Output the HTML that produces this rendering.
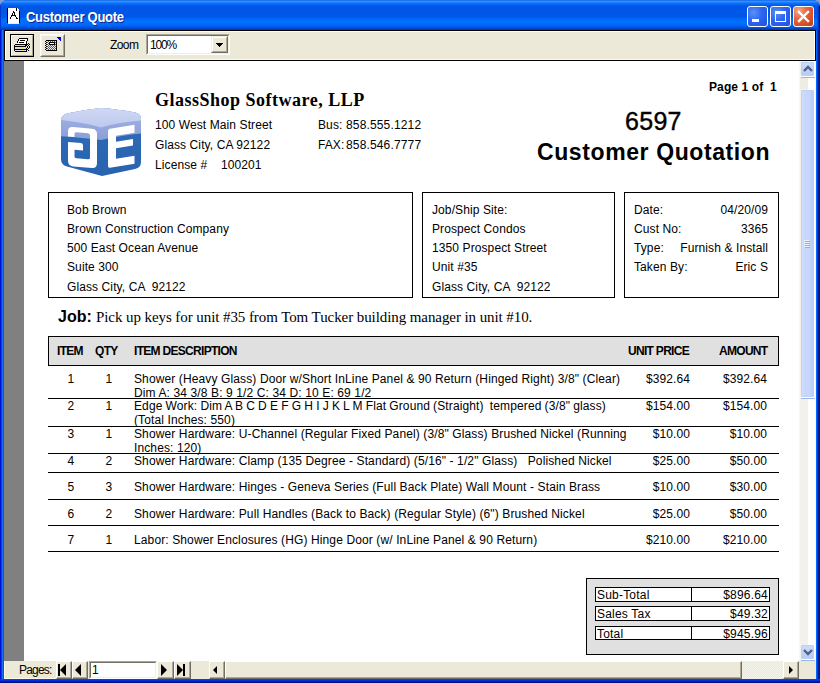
<!DOCTYPE html>
<html><head><meta charset="utf-8">
<style>
*{margin:0;padding:0;box-sizing:border-box}
html,body{width:820px;height:683px;overflow:hidden;background:#fff}
body{position:relative;font-family:"Liberation Sans",sans-serif;color:#000}
.a{position:absolute}
.t{position:absolute;white-space:pre;line-height:1}
.s12{font-size:12px;letter-spacing:0.1px}
.b{font-weight:bold}
.c{text-align:center}
#corner{left:0;top:0;width:820px;height:683px;background:#8a9ad8}
#frame{left:0;top:0;width:820px;height:683px;border-radius:7px 7px 0 0;overflow:hidden;
 background:linear-gradient(to right,#0010d0 0,#0010d0 1px,#0040e0 1px,#0040e0 2px,#1a6ff0 2px,#1a6ff0 3px,#0055e5 3px,#0055e5 816px,#0066ff 816px,#0066ff 817px,#0040d0 817px,#0040d0 818px,#001890 818px)}
#title{left:0;top:0;width:820px;height:30px;border-radius:7px 7px 0 0;
 background:linear-gradient(to bottom,#0050d8 0,#3d95ff 1px,#2a8aff 2px,#0a74ff 3px,#0a6af5 4px,#0060ee 5px,#0057e7 6px,#0057e7 17px,#0062f5 18px,#006cfd 20px,#0070ff 22px,#0068fa 25px,#0060f0 26px,#0050d8 28px,#003cc0 29px,#003cc0 30px)}
#bottomframe{left:0;top:679px;width:820px;height:4px;background:linear-gradient(to bottom,#0040f0 0,#0040f0 1px,#0030e0 1px,#0030e0 2px,#001ca0 2px,#001ca0 3px,#001080 3px)}
.wbtn{top:6px;width:21px;height:21px;border:1px solid #fff;border-radius:3px;
 background:radial-gradient(circle at 30% 30%,#5b8ff8 0,#2d66f0 45%,#1f4fe0 100%)}
#toolbar{left:4px;top:30px;width:812px;height:31px;background:#ece9d8;border:1px solid #000}
#toolbar .in{position:absolute;left:0;top:0;right:0;bottom:0;border:1px solid #fffbf0}
#grey{left:4px;top:61px;width:20px;height:600px;background:#808080}
#page{left:24px;top:61px;width:775px;height:600px;background:#fff}
#vs{left:799px;top:61px;width:17px;height:600px;background:linear-gradient(to right,#fbf8ea 0,#fbf8ea 1px,#f3f1ec 1px,#f3f1ec 9px,#fefefe 9px,#fefefe 16px,#fbf8ea 16px)}
#bbar{left:4px;top:661px;width:812px;height:18px;background:#ece9d8}
.line{position:absolute;background:#000}
.vbtn{width:13px;border-radius:2px;background:linear-gradient(to bottom,#cadbfc 0,#c1d4fa 50%,#b4cbf7 100%);box-shadow:inset 0 0 0 1px #bcd0f8}
.rbtn{background:#ece9d8;border-style:solid;border-width:1px;border-color:#fff #716f64 #716f64 #fff;box-shadow:inset -1px -1px 0 #aca899}
.box{position:absolute;border:1px solid #000}
</style></head><body>
<div id="corner" class="a"></div>
<div id="frame" class="a"></div>
<div id="title" class="a"></div>
<div id="bottomframe" class="a"></div>
<div class="a" style="left:817px;top:6px;width:3px;height:24px;background:linear-gradient(to right,#0050e8 0,#0050e8 1px,#0034c4 1px,#0034c4 2px,#001c98 2px)"></div>
<div class="a" style="left:0;top:6px;width:1px;height:24px;background:#0038d0"></div>

<!-- title icon -->
<svg class="a" style="left:0;top:0" width="24" height="28" viewBox="0 0 24 28" shape-rendering="crispEdges">
<path d="M8,8 H17 L19,10 V24 H8 Z" fill="#fff"/>
<rect x="7" y="8" width="1" height="15" fill="#000"/>
<rect x="19" y="11" width="1" height="12" fill="#000"/>
<rect x="16" y="8" width="1" height="3" fill="#000"/>
<rect x="8" y="23" width="11" height="1" fill="#f4ecd8"/>
<rect x="13" y="11" width="1" height="1" fill="#000"/><rect x="13" y="12" width="1" height="1" fill="#000"/><rect x="14" y="12" width="1" height="1" fill="#000"/><rect x="12" y="13" width="1" height="1" fill="#000"/><rect x="14" y="13" width="1" height="1" fill="#000"/><rect x="12" y="14" width="1" height="1" fill="#000"/><rect x="14" y="14" width="1" height="1" fill="#000"/><rect x="11" y="15" width="1" height="1" fill="#000"/><rect x="12" y="15" width="1" height="1" fill="#000"/><rect x="13" y="15" width="1" height="1" fill="#000"/><rect x="14" y="15" width="1" height="1" fill="#000"/><rect x="15" y="15" width="1" height="1" fill="#000"/><rect x="11" y="16" width="1" height="1" fill="#000"/><rect x="15" y="16" width="1" height="1" fill="#000"/><rect x="10" y="17" width="1" height="1" fill="#000"/><rect x="16" y="17" width="1" height="1" fill="#000"/><rect x="10" y="18" width="1" height="1" fill="#000"/><rect x="17" y="18" width="1" height="1" fill="#000"/><rect x="16" y="18" width="1" height="1" fill="#000"/>
</svg>
<div class="t b" style="left:26px;top:10px;font-size:13px;letter-spacing:-0.3px;transform:scaleY(1.1);transform-origin:0 0;color:#fff;text-shadow:1px 1px 0 #0a2596">Customer Quote</div>
<div class="a wbtn" style="left:747px"><div class="a" style="left:4px;top:12px;width:7px;height:3px;background:#fff"></div></div>
<div class="a wbtn" style="left:770px"><div class="a" style="left:4px;top:4px;width:11px;height:11px;border:1px solid #fff;border-top-width:3px"></div></div>
<div class="a wbtn" style="left:793px;background:radial-gradient(circle at 25% 20%,#f4a890 0,#e8643c 40%,#d44c20 75%,#c03c14 100%)">
<svg class="a" style="left:0;top:0" width="19" height="19" viewBox="0 0 19 19"><path d="M5,5 L14,14 M14,5 L5,14" stroke="#fff" stroke-width="2.4" stroke-linecap="square"/></svg></div>

<!-- toolbar -->
<div id="toolbar" class="a"><div class="in"></div></div>
<div class="a" style="left:10px;top:34px;width:24px;height:23px;border:1px solid #000;background:#ece9d8">
 <div class="a" style="left:0;top:0;right:0;bottom:0;border-style:solid;border-width:1px;border-color:#fff #aca899 #aca899 #fff"></div></div>
<svg class="a" style="left:11px;top:35px" width="22" height="20" viewBox="0 0 22 20" shape-rendering="crispEdges">
<path d="M8,3 H17 V4 H16 V6 H15 V9 H6 V8 H7 V6 H8 Z" fill="#fff"/>
<rect x="8" y="3" width="9" height="1" fill="#000"/>
<rect x="7" y="4" width="1" height="2" fill="#000"/>
<rect x="6" y="6" width="1" height="2" fill="#000"/>
<rect x="16" y="4" width="1" height="2" fill="#000"/>
<rect x="15" y="6" width="1" height="3" fill="#000"/>
<rect x="9" y="5" width="5" height="1" fill="#000"/>
<rect x="8" y="7" width="5" height="1" fill="#000"/>
<rect x="4" y="9" width="12" height="1" fill="#000"/>
<rect x="3" y="10" width="1" height="6" fill="#000"/>
<rect x="4" y="10" width="10" height="1" fill="#d4d4dc"/>
<rect x="4" y="11" width="11" height="1" fill="#000"/>
<rect x="4" y="12" width="11" height="2" fill="#d8d8e0"/>
<rect x="10" y="12" width="3" height="2" fill="#f0f000"/>
<rect x="4" y="14" width="12" height="1" fill="#000"/>
<rect x="5" y="15" width="9" height="1" fill="#d8d8e0"/>
<rect x="4" y="16" width="12" height="1" fill="#000"/>
<rect x="14" y="10" width="2" height="1" fill="#000"/>
<rect x="15" y="8" width="1" height="1" fill="#000"/><rect x="17" y="8" width="1" height="1" fill="#000"/>
<rect x="16" y="9" width="1" height="1" fill="#000"/><rect x="18" y="9" width="1" height="1" fill="#000"/>
<rect x="15" y="10" width="1" height="1" fill="#000"/><rect x="17" y="10" width="1" height="1" fill="#000"/>
<rect x="16" y="11" width="1" height="2" fill="#000"/><rect x="18" y="11" width="1" height="2" fill="#000"/>
<rect x="15" y="13" width="1" height="1" fill="#000"/><rect x="17" y="13" width="1" height="1" fill="#000"/>
<rect x="16" y="14" width="1" height="1" fill="#000"/>
<rect x="15" y="15" width="1" height="1" fill="#000"/><rect x="17" y="15" width="1" height="1" fill="#000"/>
</svg>
<div class="a" style="left:40px;top:34px;width:25px;height:23px;background:#ece9d8;border-style:solid;border-width:1px;border-color:#fff #716f64 #716f64 #fff">
 <div class="a" style="left:0;top:0;right:0;bottom:0;border-style:solid;border-width:1px;border-color:#f5f4ee #aca899 #aca899 #f5f4ee"></div></div>
<svg class="a" style="left:40px;top:34px" width="24" height="22" viewBox="40 34 24 22" shape-rendering="crispEdges">
<rect x="46" y="40" width="11" height="11" fill="#000"/>
<rect x="47" y="41" width="9" height="9" fill="#008c8c"/>
<rect x="47" y="41" width="1" height="1" fill="#e8e8e8"/><rect x="49" y="41" width="1" height="1" fill="#e8e8e8"/><rect x="51" y="41" width="1" height="1" fill="#e8e8e8"/><rect x="53" y="41" width="1" height="1" fill="#e8e8e8"/><rect x="55" y="41" width="1" height="1" fill="#e8e8e8"/><rect x="48" y="42" width="1" height="1" fill="#e8e8e8"/><rect x="50" y="42" width="1" height="1" fill="#e8e8e8"/><rect x="52" y="42" width="1" height="1" fill="#e8e8e8"/><rect x="54" y="42" width="1" height="1" fill="#e8e8e8"/><rect x="47" y="43" width="1" height="1" fill="#e8e8e8"/><rect x="49" y="43" width="1" height="1" fill="#e8e8e8"/><rect x="51" y="43" width="1" height="1" fill="#e8e8e8"/><rect x="53" y="43" width="1" height="1" fill="#e8e8e8"/><rect x="55" y="43" width="1" height="1" fill="#e8e8e8"/><rect x="48" y="44" width="1" height="1" fill="#e8e8e8"/><rect x="50" y="44" width="1" height="1" fill="#e8e8e8"/><rect x="52" y="44" width="1" height="1" fill="#e8e8e8"/><rect x="54" y="44" width="1" height="1" fill="#e8e8e8"/><rect x="47" y="45" width="1" height="1" fill="#e8e8e8"/><rect x="49" y="45" width="1" height="1" fill="#e8e8e8"/><rect x="51" y="45" width="1" height="1" fill="#e8e8e8"/><rect x="53" y="45" width="1" height="1" fill="#e8e8e8"/><rect x="55" y="45" width="1" height="1" fill="#e8e8e8"/><rect x="48" y="46" width="1" height="1" fill="#e8e8e8"/><rect x="50" y="46" width="1" height="1" fill="#e8e8e8"/><rect x="52" y="46" width="1" height="1" fill="#e8e8e8"/><rect x="54" y="46" width="1" height="1" fill="#e8e8e8"/><rect x="47" y="47" width="1" height="1" fill="#e8e8e8"/><rect x="49" y="47" width="1" height="1" fill="#e8e8e8"/><rect x="51" y="47" width="1" height="1" fill="#e8e8e8"/><rect x="53" y="47" width="1" height="1" fill="#e8e8e8"/><rect x="55" y="47" width="1" height="1" fill="#e8e8e8"/><rect x="48" y="48" width="1" height="1" fill="#e8e8e8"/><rect x="50" y="48" width="1" height="1" fill="#e8e8e8"/><rect x="52" y="48" width="1" height="1" fill="#e8e8e8"/><rect x="54" y="48" width="1" height="1" fill="#e8e8e8"/><rect x="47" y="49" width="1" height="1" fill="#e8e8e8"/><rect x="49" y="49" width="1" height="1" fill="#e8e8e8"/><rect x="51" y="49" width="1" height="1" fill="#e8e8e8"/><rect x="53" y="49" width="1" height="1" fill="#e8e8e8"/><rect x="55" y="49" width="1" height="1" fill="#e8e8e8"/>
<rect x="49" y="42" width="6" height="3" fill="#000"/>
<rect x="50" y="43" width="4" height="1" fill="#fff"/>
<rect x="46" y="41" width="1" height="1" fill="#f0e000"/><rect x="46" y="43" width="1" height="1" fill="#f0e000"/><rect x="46" y="45" width="1" height="1" fill="#f0e000"/><rect x="46" y="47" width="1" height="1" fill="#f0e000"/><rect x="46" y="49" width="1" height="1" fill="#f0e000"/>
<rect x="45" y="41" width="1" height="1" fill="#000"/><rect x="45" y="43" width="1" height="1" fill="#000"/><rect x="45" y="45" width="1" height="1" fill="#000"/><rect x="45" y="47" width="1" height="1" fill="#000"/><rect x="45" y="49" width="1" height="1" fill="#000"/>
<path d="M56,37 H61 V42 Z" fill="#0000e0"/>
</svg>
<div class="t" style="left:110px;top:39px;font-size:12px;letter-spacing:-0.6px">Zoom</div>
<div class="a" style="left:146px;top:34px;width:84px;height:21px;background:#fff;border-style:solid;border-width:1px;border-color:#aca899 #fff #fff #aca899">
 <div class="a" style="left:0;top:0;right:0;bottom:0;border-style:solid;border-width:1px;border-color:#716f64 #f1efe2 #f1efe2 #716f64"></div></div>
<div class="t" style="left:150px;top:39px;font-size:12px;letter-spacing:-1.2px">100%</div>
<div class="a" style="left:211px;top:36px;width:17px;height:17px;background:#ece9d8;border-style:solid;border-width:1px;border-color:#f1efe2 #716f64 #716f64 #f1efe2">
 <div class="a" style="left:0;top:0;right:0;bottom:0;border-style:solid;border-width:1px;border-color:#fff #aca899 #aca899 #fff"></div></div>
<svg class="a" style="left:216px;top:43px" width="7" height="4" viewBox="0 0 7 4" shape-rendering="crispEdges"><rect x="0" y="0" width="7" height="1"/><rect x="1" y="1" width="5" height="1"/><rect x="2" y="2" width="3" height="1"/><rect x="3" y="3" width="1" height="1"/></svg>

<div id="grey" class="a"></div>
<div id="page" class="a"></div>
<div id="vs" class="a"></div>
<div class="a" style="left:800px;top:78px;width:8px;height:11px;background:#eeede5"></div>
<div class="a vbtn" style="left:801px;top:62px;height:14px"></div>
<div class="a" style="left:801px;top:76px;width:14px;height:1px;background:#fff"></div>
<div class="a" style="left:801px;top:77px;width:14px;height:1px;background:#9db4e8"></div>
<svg class="a" style="left:801px;top:62px" width="14" height="14" viewBox="0 0 14 14"><path d="M3,9 L7,5 L11,9" fill="none" stroke="#4d6185" stroke-width="2.4"/></svg>
<div class="a vbtn" style="left:801px;top:90px;height:307px;background:linear-gradient(to right,#b8cdf8 0,#d2e0fd 1px,#c8d7fc 3px,#c6d5fb 9px,#b6cbf6 12px,#aec4f2 13px)"></div>
<div class="a" style="left:801px;top:397px;width:14px;height:1px;background:#fff"></div>
<div class="a" style="left:801px;top:398px;width:14px;height:1px;background:#9db4e8"></div>
<svg class="a" style="left:800px;top:238px" width="14" height="10" viewBox="0 0 14 10">
<path d="M4,2.5 L9,2.5 M4,4.5 L9,4.5 M4,6.5 L9,6.5 M4,8.5 L9,8.5" stroke="#eef4ff" stroke-width="1"/>
<path d="M5,3.5 L10,3.5 M5,5.5 L10,5.5 M5,7.5 L10,7.5 M5,9.5 L10,9.5" stroke="#8faef0" stroke-width="1"/>
</svg>
<div class="a vbtn" style="left:801px;top:645px;height:14px"></div>
<div class="a" style="left:801px;top:659px;width:14px;height:1px;background:#fff"></div>
<div class="a" style="left:801px;top:660px;width:14px;height:1px;background:#9db4e8"></div>
<svg class="a" style="left:801px;top:645px" width="14" height="14" viewBox="0 0 14 14"><path d="M3,5 L7,9 L11,5" fill="none" stroke="#4d6185" stroke-width="2.4"/></svg>

<div id="bbar" class="a"></div>
<div class="a" style="left:4px;top:661px;width:52px;height:18px;background:#ece9d8;border-left:1px solid #fff8e0;border-bottom:1px solid #fff8e0"></div>
<div class="t" style="left:19px;top:664px;font-size:12px;letter-spacing:-0.8px">Pages:</div>
<div class="a rbtn" style="left:56px;top:661px;width:16px;height:18px"></div>
<div class="a" style="left:58px;top:664px;width:2px;height:12px;background:#000"></div>
<div class="a" style="left:60px;top:664px;width:0;height:0;border-style:solid;border-width:6px 6px 6px 0;border-color:transparent #000 transparent transparent"></div>
<div class="a rbtn" style="left:72px;top:661px;width:16px;height:18px"></div>
<div class="a" style="left:75px;top:664px;width:0;height:0;border-style:solid;border-width:6px 6px 6px 0;border-color:transparent #000 transparent transparent"></div>
<div class="a" style="left:89px;top:661px;width:68px;height:18px;background:#fff;border-style:solid;border-width:1px;border-color:#aca899 #fff #fff #aca899">
 <div class="a" style="left:0;top:0;right:0;bottom:0;border-style:solid;border-width:1px;border-color:#716f64 #f1efe2 #f1efe2 #716f64"></div></div>
<div class="t" style="left:92px;top:664px;font-size:12px">1</div>
<div class="a rbtn" style="left:157px;top:661px;width:17px;height:18px"></div>
<div class="a" style="left:161px;top:664px;width:0;height:0;border-style:solid;border-width:6px 0 6px 6px;border-color:transparent transparent transparent #000"></div>
<div class="a rbtn" style="left:174px;top:661px;width:17px;height:18px"></div>
<div class="a" style="left:177px;top:664px;width:0;height:0;border-style:solid;border-width:6px 0 6px 6px;border-color:transparent transparent transparent #000"></div>
<div class="a" style="left:183px;top:664px;width:2px;height:12px;background:#000"></div>
<div class="a" style="left:191px;top:661px;width:18px;height:18px;background:#ece9d8"></div>
<div class="a" style="left:209px;top:661px;width:590px;height:18px;background-color:#f5f4ea;background-image:linear-gradient(45deg,#ece9d8 25%,transparent 25%,transparent 75%,#ece9d8 75%),linear-gradient(45deg,#ece9d8 25%,transparent 25%,transparent 75%,#ece9d8 75%);background-size:2px 2px;background-position:0 0,1px 1px"></div>
<div class="a rbtn" style="left:209px;top:661px;width:16px;height:18px"></div>
<div class="a" style="left:213px;top:666px;width:0;height:0;border-style:solid;border-width:4px 4px 4px 0;border-color:transparent #000 transparent transparent"></div>
<div class="a rbtn" style="left:225px;top:661px;width:517px;height:18px"></div>
<div class="a rbtn" style="left:783px;top:661px;width:16px;height:18px"></div>
<div class="a" style="left:789px;top:666px;width:0;height:0;border-style:solid;border-width:4px 0 4px 4px;border-color:transparent transparent transparent #000"></div>
<div class="a" style="left:799px;top:661px;width:17px;height:18px;background:#ece9d8"></div>

<!-- page content -->
<svg class="a" style="left:56px;top:104px" width="90" height="76" viewBox="56 104 90 76">
<defs>
<clipPath id="cube"><path d="M61,121 Q61,115 67,113.5 Q85,109.5 101,108 Q120,109.5 135,112.5 Q141,113.5 141,119 L141,162 Q141,167.5 135,169 L102,176 L67,166.5 Q61,165 61,159 Z"/></clipPath>
<linearGradient id="gtop" x1="0" y1="0" x2="0" y2="1"><stop offset="0" stop-color="#d4dcf5"/><stop offset="1" stop-color="#bcc8ee"/></linearGradient>
<linearGradient id="gband" x1="0" y1="0" x2="0" y2="1"><stop offset="0" stop-color="#aab8e6"/><stop offset="1" stop-color="#8a9ed8"/></linearGradient>
<linearGradient id="gdark" x1="0" y1="0" x2="0" y2="1"><stop offset="0" stop-color="#2f6cb8"/><stop offset="1" stop-color="#2963b0"/></linearGradient>
</defs>
<g clip-path="url(#cube)">
<rect x="56" y="104" width="90" height="76" fill="url(#gdark)"/>
<path d="M56,104 L146,104 L146,133 Q125,134.5 101,140 Q82,137.5 56,135.8 Z" fill="url(#gband)"/>
<path d="M56,104 L146,104 L146,120 Q118,122 101,127.5 Q84,122 56,119.5 Z" fill="url(#gtop)"/>
</g>
<path fill="#fff" transform="matrix(1,0.087,0,1,0,-5.57)" d="M68,136.2 L68,131 Q68,126.2 73,126.2 L92,126.2 Q97,126.2 97,131 L97,160.5 Q97,165.6 92,165.6 L73,165.6 Q68,165.6 68,160.5 L68,141.6 L81,141.6 Q83,141.6 83,143.6 L83,148.8 L74.5,148.8 L74.5,155.5 Q74.5,157.2 76.5,157.2 L88,157.2 Q90,157.2 90,155.2 L90,133.1 Q90,131.1 88,131.1 L76.5,131.1 Q74.5,131.1 74.5,133.1 L74.5,136.2 Z"/>
<path fill="#fff" transform="matrix(1,-0.16,0,1,0,17.28)" d="M108,131 Q108,129 110,129 L134.5,129 L134.5,137 L116,137 L116,143 L133,143 L133,149.5 L116,149.5 L116,160 L134.5,160 L134.5,168 L110,168 Q108,168 108,166 Z"/>
</svg>

<div class="t b" style="left:155px;top:91px;font-family:'Liberation Serif',serif;font-size:18px;letter-spacing:0.5px">GlassShop Software, LLP</div>
<div class="t s12" style="left:155px;top:119px">100 West Main Street</div>
<div class="t s12" style="left:155px;top:139px">Glass City, CA 92122</div>
<div class="t s12" style="left:155px;top:159px">License #</div><div class="t s12" style="left:221px;top:159px">100201</div>
<div class="t s12" style="left:318px;top:119px">Bus:</div><div class="t s12" style="left:346px;top:119px;letter-spacing:0.15px">858.555.1212</div>
<div class="t s12" style="left:318px;top:139px">FAX:</div><div class="t s12" style="left:346px;top:139px;letter-spacing:0.15px">858.546.7777</div>

<div class="t s12 b" style="left:709px;top:81px">Page 1 of  1</div>
<div class="t" style="left:625px;top:109px;font-size:25px;letter-spacing:0.3px;-webkit-text-stroke:0.4px #000">6597</div>
<div class="t b" style="left:537px;top:141px;font-size:23px;letter-spacing:0.6px">Customer Quotation</div>

<div class="box" style="left:48px;top:192px;width:365px;height:106px"></div>
<div class="box" style="left:422px;top:192px;width:193px;height:106px"></div>
<div class="box" style="left:624px;top:192px;width:155px;height:106px"></div>

<div class="t s12" style="left:67px;top:204px">Bob Brown</div>
<div class="t s12" style="left:67px;top:223px">Brown Construction Company</div>
<div class="t s12" style="left:67px;top:242px">500 East Ocean Avenue</div>
<div class="t s12" style="left:67px;top:261px">Suite 300</div>
<div class="t s12" style="left:67px;top:281px">Glass City, CA  92122</div>

<div class="t s12" style="left:432px;top:204px">Job/Ship Site:</div>
<div class="t s12" style="left:432px;top:223px">Prospect Condos</div>
<div class="t s12" style="left:432px;top:242px">1350 Prospect Street</div>
<div class="t s12" style="left:432px;top:261px">Unit #35</div>
<div class="t s12" style="left:432px;top:281px">Glass City, CA  92122</div>

<div class="t s12" style="left:634px;top:204px">Date:</div>
<div class="t s12" style="left:634px;top:223px">Cust No:</div>
<div class="t s12" style="left:634px;top:242px">Type:</div>
<div class="t s12" style="left:634px;top:261px">Taken By:</div>
<div class="t s12" style="right:52px;top:204px">04/20/09</div>
<div class="t s12" style="right:52px;top:223px">3365</div>
<div class="t s12" style="right:52px;top:242px">Furnish &amp; Install</div>
<div class="t s12" style="right:52px;top:261px">Eric S</div>

<div class="t b" style="left:58px;top:309px;font-size:16px">Job:</div>
<div class="t" style="left:96px;top:310px;font-size:15px;letter-spacing:-0.08px;font-family:'Liberation Serif',serif">Pick up keys for unit #35 from Tom Tucker building manager in unit #10.</div>

<div class="box" style="left:48px;top:336px;width:731px;height:30px;background:#e0e0e0"></div>
<div class="t s12 b" style="left:57px;top:345px;letter-spacing:-0.7px">ITEM</div>
<div class="t s12 b" style="left:95px;top:345px;letter-spacing:-0.7px">QTY</div>
<div class="t s12 b" style="left:134px;top:345px;letter-spacing:-0.7px">ITEM DESCRIPTION</div>
<div class="t s12 b" style="left:628px;top:345px;letter-spacing:-0.7px">UNIT PRICE</div>
<div class="t s12 b" style="left:719px;top:345px;letter-spacing:-0.7px">AMOUNT</div>

<div class="t s12 c" style="left:60px;width:22px;top:373px">1</div>
<div class="t s12 c" style="left:98px;width:22px;top:373px">1</div>
<div class="t s12" style="left:134px;top:373px;letter-spacing:0.12px">Shower (Heavy Glass) Door w/Short InLine Panel &amp; 90 Return (Hinged Right) 3/8" (Clear)</div>
<div class="t s12" style="left:134px;top:387px;letter-spacing:0.12px">Dim A: 34 3/8 B: 9 1/2 C: 34 D: 10 E: 69 1/2</div>
<div class="t s12" style="right:130px;top:373px">$392.64</div>
<div class="t s12" style="right:53px;top:373px">$392.64</div>
<div class="t s12 c" style="left:60px;width:22px;top:400px">2</div>
<div class="t s12 c" style="left:98px;width:22px;top:400px">1</div>
<div class="t s12" style="left:134px;top:400px;letter-spacing:0.12px;word-spacing:-0.37px">Edge Work: Dim A B C D E F G H I J K L M Flat Ground (Straight)  tempered (3/8" glass)</div>
<div class="t s12" style="left:134px;top:414px;letter-spacing:0.12px">(Total Inches: 550)</div>
<div class="t s12" style="right:130px;top:400px">$154.00</div>
<div class="t s12" style="right:53px;top:400px">$154.00</div>
<div class="t s12 c" style="left:60px;width:22px;top:428px">3</div>
<div class="t s12 c" style="left:98px;width:22px;top:428px">1</div>
<div class="t s12" style="left:134px;top:428px;letter-spacing:0.12px">Shower Hardware: U-Channel (Regular Fixed Panel) (3/8" Glass) Brushed Nickel (Running</div>
<div class="t s12" style="left:134px;top:442px;letter-spacing:0.12px">Inches: 120)</div>
<div class="t s12" style="right:130px;top:428px">$10.00</div>
<div class="t s12" style="right:53px;top:428px">$10.00</div>
<div class="t s12 c" style="left:60px;width:22px;top:455px">4</div>
<div class="t s12 c" style="left:98px;width:22px;top:455px">2</div>
<div class="t s12" style="left:134px;top:455px;letter-spacing:0.12px">Shower Hardware: Clamp (135 Degree - Standard) (5/16" - 1/2" Glass)   Polished Nickel</div>
<div class="t s12" style="right:130px;top:455px">$25.00</div>
<div class="t s12" style="right:53px;top:455px">$50.00</div>
<div class="t s12 c" style="left:60px;width:22px;top:481px">5</div>
<div class="t s12 c" style="left:98px;width:22px;top:481px">3</div>
<div class="t s12" style="left:134px;top:481px;letter-spacing:0.12px">Shower Hardware: Hinges - Geneva Series (Full Back Plate) Wall Mount - Stain Brass</div>
<div class="t s12" style="right:130px;top:481px">$10.00</div>
<div class="t s12" style="right:53px;top:481px">$30.00</div>
<div class="t s12 c" style="left:60px;width:22px;top:508px">6</div>
<div class="t s12 c" style="left:98px;width:22px;top:508px">2</div>
<div class="t s12" style="left:134px;top:508px;letter-spacing:0.12px">Shower Hardware: Pull Handles (Back to Back) (Regular Style) (6") Brushed Nickel</div>
<div class="t s12" style="right:130px;top:508px">$25.00</div>
<div class="t s12" style="right:53px;top:508px">$50.00</div>
<div class="t s12 c" style="left:60px;width:22px;top:534px">7</div>
<div class="t s12 c" style="left:98px;width:22px;top:534px">1</div>
<div class="t s12" style="left:134px;top:534px;letter-spacing:0.12px">Labor: Shower Enclosures (HG) Hinge Door (w/ InLine Panel &amp; 90 Return)</div>
<div class="t s12" style="right:130px;top:534px">$210.00</div>
<div class="t s12" style="right:53px;top:534px">$210.00</div>
<div class="line" style="left:48px;top:398px;width:731px;height:1px"></div>
<div class="line" style="left:48px;top:426px;width:731px;height:1px"></div>
<div class="line" style="left:48px;top:453px;width:731px;height:1px"></div>
<div class="line" style="left:48px;top:472px;width:731px;height:1px"></div>
<div class="line" style="left:48px;top:499px;width:731px;height:1px"></div>
<div class="line" style="left:48px;top:525px;width:731px;height:1px"></div>
<div class="line" style="left:48px;top:551px;width:731px;height:1px"></div>
<div class="box" style="left:586px;top:578px;width:193px;height:77px;background:#e0e0e0"></div>
<div class="box" style="left:595px;top:587px;width:175px;height:15px;background:#fff"></div>
<div class="line" style="left:691px;top:587px;width:1px;height:15px"></div>
<div class="t s12" style="left:597px;top:589px;letter-spacing:0.2px">Sub-Total</div>
<div class="t s12" style="right:52px;top:589px;letter-spacing:0.2px">$896.64</div>
<div class="box" style="left:595px;top:606px;width:175px;height:15px;background:#fff"></div>
<div class="line" style="left:691px;top:606px;width:1px;height:15px"></div>
<div class="t s12" style="left:597px;top:608px;letter-spacing:0.2px">Sales Tax</div>
<div class="t s12" style="right:52px;top:608px;letter-spacing:0.2px">$49.32</div>
<div class="box" style="left:595px;top:626px;width:175px;height:14px;background:#fff"></div>
<div class="line" style="left:691px;top:626px;width:1px;height:14px"></div>
<div class="t s12" style="left:597px;top:628px;letter-spacing:0.2px">Total</div>
<div class="t s12" style="right:52px;top:628px;letter-spacing:0.2px">$945.96</div>
</body></html>
